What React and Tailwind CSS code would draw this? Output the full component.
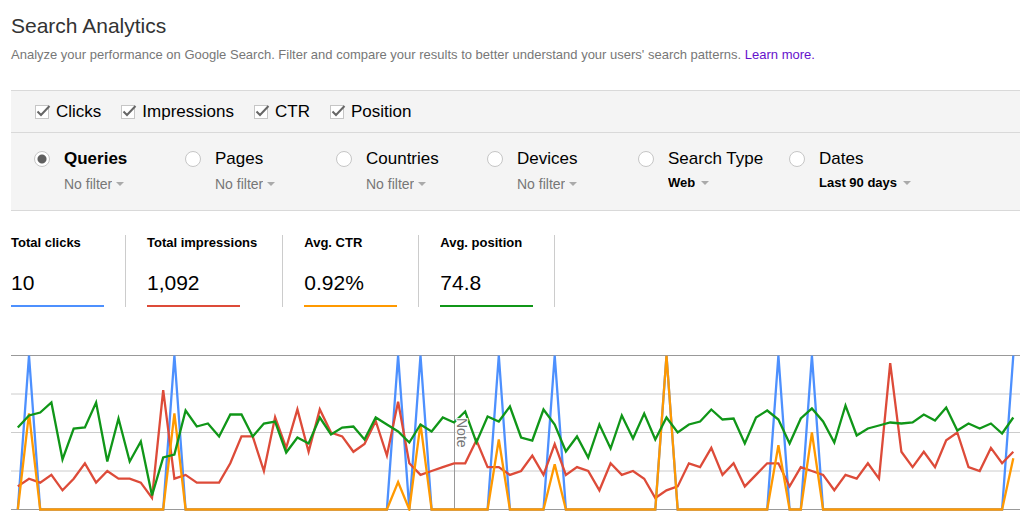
import { useState } from "react";
import clsx from "clsx";

const METRICS = ["Clicks", "Impressions", "CTR", "Position"];

const DIMENSIONS = [
  { name: "Queries", filter: "No filter" },
  { name: "Pages", filter: "No filter" },
  { name: "Countries", filter: "No filter" },
  { name: "Devices", filter: "No filter" },
  { name: "Search Type", filter: "Web", active: true },
  { name: "Dates", filter: "Last 90 days", active: true },
];

const TOTALS = [
  { label: "Total clicks", value: "10", bar: "bg-[#4d90fe]" },
  { label: "Total impressions", value: "1,092", bar: "bg-[#dd4b39]" },
  { label: "Avg. CTR", value: "0.92%", bar: "bg-[#ff9900]" },
  { label: "Avg. position", value: "74.8", bar: "bg-[#109618]" },
];

// one entry per day, 90 days
const impressions = [
  6, 8, 7, 9, 5, 8, 12, 7, 10, 8, 8, 7, 3, 31, 8, 9, 7, 7, 7, 12, 19, 19, 10,
  24, 16, 26, 15, 26, 20, 19, 15, 17, 23, 14, 28, 12, 9, 10, 11, 12, 12, 18, 11,
  11, 9, 10, 14, 9, 17, 9, 11, 10, 5, 12, 9, 10, 8, 3, 5, 6, 12, 11, 16, 9, 12,
  6, 9, 12, 12, 6, 11, 10, 9, 5, 9, 8, 12, 8, 38, 15, 11, 15, 11, 18, 20, 11,
  10, 16, 12, 15,
];

const positions = [
  72, 60, 57, 47, 104, 73, 72, 47, 106, 63, 106, 86, 140, 102, 99, 55, 71, 68,
  81, 59, 59, 81, 68, 66, 97, 82, 88, 62, 79, 72, 71, 84, 62, 69, 76, 87, 69,
  76, 62, 67, 56, 87, 61, 66, 51, 82, 85, 54, 69, 96, 81, 102, 69, 93, 60, 83,
  58, 84, 62, 77, 69, 66, 54, 64, 63, 88, 62, 55, 64, 88, 63, 53, 66, 87, 50,
  80, 73, 70, 67, 68, 67, 59, 65, 52, 75, 68, 73, 68, 78, 62,
];

const clickDays = [1, 14, 34, 36, 43, 48, 58, 68, 71, 89];
const clicks = impressions.map((_, i) => (clickDays.includes(i) ? 1 : 0));
const ctr = clicks.map((c, i) => c / impressions[i]);

const NOTE_DAY = 39;
const TOP = 1.5;
const HEIGHT = 154;

const dayX = (i) => 6.8 + i * 11.185;

// share is 0 at the bottom of the chart and 1 at the top
const toPoints = (data, share) =>
  data
    .map((v, i) => `${dayX(i).toFixed(1)},${(TOP + HEIGHT * (1 - share(v))).toFixed(1)}`)
    .join(" ");

const SERIES = [
  { color: "#4d90fe", points: toPoints(clicks, (v) => v) },
  { color: "#dd4b39", points: toPoints(impressions, (v) => v / 40) },
  { color: "#ff9900", points: toPoints(ctr, (v) => v / 0.2) },
  { color: "#109618", points: toPoints(positions, (v) => 1 - v / 154) },
];

const MetricCheckbox = ({ name }) => {
  const [checked, setChecked] = useState(true);

  return (
    <label className="flex items-center gap-[7px]">
      <span className="relative flex">
        <input
          type="checkbox"
          checked={checked}
          onChange={() => setChecked(!checked)}
          className="peer size-3.5 appearance-none border border-[#c6c6c6] bg-white"
        />
        <svg
          viewBox="0 0 16 14"
          className="pointer-events-none absolute top-0 left-0 hidden h-3.5 w-4 peer-checked:block"
        >
          <path d="M2.5 6.5 L6 10 L14.5 1" fill="none" stroke="#666" strokeWidth="2" />
        </svg>
      </span>
      {name}
    </label>
  );
};

const Dimension = ({ name, filter, active, selected, onSelect }) => (
  <div className="w-[151px]">
    <label className={clsx("flex h-6 items-center gap-3.5", selected && "font-bold")}>
      <input
        type="radio"
        name="dimension"
        checked={selected}
        onChange={onSelect}
        className="size-4 shrink-0 appearance-none rounded-full border border-[#c6c6c6] bg-white checked:bg-[radial-gradient(circle,#5f5f5f_4px,#fff_5px)]"
      />
      {name}
    </label>
    <div
      className={clsx(
        "mt-[3px] flex items-center pl-[30px]",
        active
          ? "gap-1.5 text-[13px] leading-[18px] font-bold text-black"
          : "gap-1 text-[14px] leading-5 text-[#777]"
      )}
    >
      <select aria-label={`${name} filter`} className="field-sizing-content appearance-none">
        <option>{filter}</option>
      </select>
      <svg viewBox="0 0 8 4" className="h-1 w-2">
        <path d="M0 0 H8 L4 4 Z" fill="#aaa" />
      </svg>
    </div>
  </div>
);

const Chart = () => (
  <svg viewBox="0 0 1009 157" className="mt-[47px] w-full" role="img" aria-label="Search performance">
    {[0.25, 0.5, 0.75].map((s) => (
      <line key={s} x1="0" x2="1009" y1={TOP + HEIGHT * s} y2={TOP + HEIGHT * s} stroke="#ccc" />
    ))}
    {[0, 1].map((s) => (
      <line key={s} x1="0" x2="1009" y1={TOP + HEIGHT * s} y2={TOP + HEIGHT * s} stroke="#999" />
    ))}
    <line x1="443.5" x2="443.5" y1={TOP} y2={TOP + HEIGHT} stroke="#999" />
    {SERIES.map(({ color, points }) => (
      <polyline key={color} points={points} fill="none" stroke={color} strokeWidth="2.3" />
    ))}
    <text
      transform={`translate(${Math.round(dayX(NOTE_DAY)) + 3} 64) rotate(90)`}
      fill="#777"
      stroke="#fff"
      strokeWidth="2"
      paintOrder="stroke"
      className="text-[14px]"
    >
      Note
    </text>
  </svg>
);

const App = () => {
  const [dimension, setDimension] = useState("Queries");

  return (
    <main className="bg-white pt-3 pr-1 pl-[11px] font-['Liberation_Sans',Arial,sans-serif] text-black">
      <h1 className="text-[21px] leading-7 text-[#333]">Search Analytics</h1>
      <p className="mt-[5px] text-[13px] leading-5 text-[#777]">
        Analyze your performance on Google Search. Filter and compare your results to better
        understand your users' search patterns.{" "}
        <a href="#" className="text-[#6611cc]">
          Learn more.
        </a>
      </p>

      <section className="mt-[25px] border-y border-[#d9d9d9] bg-[#f4f4f4] text-[17px]">
        <div className="flex h-[42px] items-center gap-5 border-b border-[#d9d9d9] pl-6">
          {METRICS.map((name) => (
            <MetricCheckbox key={name} name={name} />
          ))}
        </div>
        <div className="flex h-[77px] items-start pt-3.5 pl-[23px]">
          {DIMENSIONS.map((d) => (
            <Dimension
              key={d.name}
              {...d}
              selected={dimension === d.name}
              onSelect={() => setDimension(d.name)}
            />
          ))}
        </div>
      </section>

      <section className="mt-6 flex">
        {TOTALS.map(({ label, value, bar }) => (
          <div
            key={label}
            className="border-r border-[#ccc] px-[21px] first:pl-0"
          >
            <div className="pr-1 text-[13px] leading-4 font-bold">{label}</div>
            <div className="mt-5 text-[21px] leading-6">{value}</div>
            <div className={clsx("mt-2.5 h-0.5 w-[93px]", bar)} />
          </div>
        ))}
      </section>

      <Chart />
    </main>
  );
};

export default App;
